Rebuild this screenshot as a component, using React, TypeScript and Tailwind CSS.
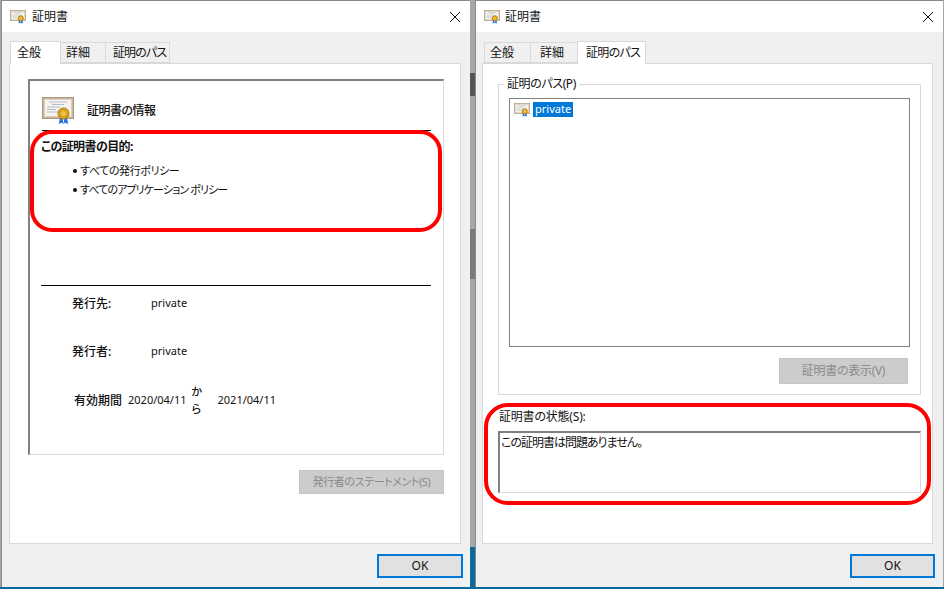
import React from 'react';

const font = "font-['Noto_Sans','Noto_Sans_CJK_JP',sans-serif] [font-feature-settings:'palt']";

function CertIcon({ className }: { className: string }) {
  return (
    <svg className={className} viewBox="0 0 32 28">
      <rect x="0.5" y="0.5" width="31" height="21" fill="#c9b9a4" stroke="#a8977f" />
      <rect x="2.5" y="2.5" width="27" height="17" fill="#f7f4ee" stroke="#d8cdbd" />
      <path d="M7 5h18M10 7.5h12M5 10h13M5 12.5h9M5 15h11" stroke="#b3bdca" strokeWidth="1" />
      <path d="M18 20l-1 7 3-1.5 1.5 1.5 1-6zM25 20l1 7-3-1.5-1.500 1.500-1-6z" fill="#1f6fe0" />
      <circle cx="21.500" cy="16.500" r="5.500" fill="#d8a21c" stroke="#a8790f" />
      <circle cx="21.500" cy="16.500" r="2.500" fill="#efc24a" />
    </svg>
  );
}

function Tab({ label, active, className }: { label: string; active?: boolean; className: string }) {
  return (
    <div
      className={`flex items-center whitespace-nowrap border border-[#d9d9d9] text-[12px] text-[#111] ${
        active ? 'z-10 -mb-px h-[23px] border-b-0 bg-white' : 'h-[21px] bg-[#f0f0f0]'
      } ${className}`}
    >
      {label}
    </div>
  );
}

function Titlebar({ titleClass }: { titleClass: string }) {
  return (
    <div className="flex h-[31px] shrink-0 items-center bg-white pl-[8px] pr-[9px]">
      <CertIcon className="h-[14px] w-[16px]" />
      <span className={`text-[12px] text-[#111] ${titleClass}`}>証明書</span>
      <svg className="ml-auto h-[12px] w-[12px]" viewBox="0 0 12 12">
        <path d="M1 1l10 10M11 1L1 11" stroke="#111" strokeWidth="1" />
      </svg>
    </div>
  );
}

function GrayButton({ label, className }: { label: string; className: string }) {
  return (
    <div className={`flex items-center justify-center whitespace-nowrap border border-[#c4c4c4] bg-[#cccccc] text-[#8a8a8a] ${className}`}>
      {label}
    </div>
  );
}

function OkButton({ className }: { className: string }) {
  return (
    <div className={`mt-[10px] ml-auto flex h-[24px] items-center justify-center border-2 border-[#0078d7] bg-[#e1e1e1] text-[12px] text-[#111] ${className}`}>
      OK
    </div>
  );
}

function GeneralWindow() {
  return (
    <div className="relative flex h-[587px] w-[469px] shrink-0 flex-col border-t border-l border-[#8a8a8a] bg-[#f0f0f0]">
      <Titlebar titleClass="ml-[6px]" />
      <div className="flex flex-1 flex-col pl-[7px] pr-[9px]">
        <div className="mt-[8px] flex h-[23px] items-end pl-px">
          <Tab label="全般" active className="w-[51px] pl-[6px]" />
          <Tab label="詳細" className="-ml-px w-[46px] pl-[5px]" />
          <Tab label="証明のパス" className="-ml-px w-[65px] pl-[7px] tracking-[-0.9px]" />
        </div>
        <div className="h-[481px] border border-[#d9d9d9] bg-white pl-[18px] pr-[16px] pt-[15px]">
          <div className="h-[376px] border-t-2 border-l-2 border-r border-b border-t-[#808080] border-l-[#808080] border-r-[#d9d9d9] border-b-[#d9d9d9] px-[11px]">
            <div className="flex h-[50px] items-center pl-px pt-[10px]">
              <CertIcon className="h-[28px] w-[32px]" />
              <span className="ml-[13px] text-[12px] font-medium tracking-[-0.5px] text-[#111]">証明書の情報</span>
            </div>
            <div className="mx-px mt-[-1px] h-px bg-black" />
            <div className="pt-[7px] text-[12px] font-bold tracking-[-0.6px] text-[#111]">この証明書の目的:</div>
            <ul className="mt-[6px] ml-[32px] flex flex-col gap-px text-[11px] leading-[18px] text-[#111]">
              <li className="flex items-center tracking-[-0.4px]">
                <span className="mr-[3px] h-[4px] w-[4px] rounded-full bg-[#111]" />
                すべての発行ポリシー
              </li>
              <li className="flex items-center tracking-[-0.9px]">
                <span className="mr-[3px] h-[4px] w-[4px] rounded-full bg-[#111]" />
                すべてのアプリケーション ポリシー
              </li>
            </ul>
            <div className="mt-[86px] mr-px h-px bg-black" />
            <div className="mt-[9px] flex h-[17px] items-center pl-[31px] text-[12px] text-[#111]">
              <span className="w-[79px] font-medium">発行先:</span>
              <span className="text-[11px]">private</span>
            </div>
            <div className="mt-[31px] flex h-[17px] items-center pl-[31px] text-[12px] text-[#111]">
              <span className="w-[79px] font-medium">発行者:</span>
              <span className="text-[11px]">private</span>
            </div>
            <div className="mt-[32px] flex h-[17px] items-center pl-[33px] text-[11px] text-[#111]">
              <span className="w-[54px] text-[12px] font-medium">有効期間</span>
              <span>2020/04/11</span>
              <span className="ml-[5px] w-[20px] font-medium">から</span>
              <span className="ml-[6px]">2021/04/11</span>
            </div>
          </div>
          <GrayButton label="発行者のステートメント(S)" className="mt-[15px] ml-auto h-[24px] w-[145px] text-[11px] tracking-[-0.4px]" />
        </div>
        <OkButton className="-mr-[2px] w-[86px]" />
      </div>
      {/* 赤枠 */}
      <div className="absolute top-[129px] left-[28px] h-[102px] w-[412px] rounded-[22px] border-[4px] border-[#ff0000]" />
    </div>
  );
}

function PathWindow() {
  return (
    <div className="relative flex h-[587px] w-[468px] shrink-0 flex-col border-t border-l border-[#8a8a8a] bg-[#f0f0f0]">
      <Titlebar titleClass="ml-[5px]" />
      <div className="flex flex-1 flex-col pl-[6px] pr-[10px]">
        <div className="mt-[8px] flex h-[23px] items-end pl-[2px]">
          <Tab label="全般" className="w-[47px] pl-[5px]" />
          <Tab label="詳細" className="-ml-px w-[48px] pl-[9px]" />
          <Tab label="証明のパス" active className="-ml-px w-[69px] pl-[8px] tracking-[-0.7px]" />
        </div>
        <div className="h-[481px] border border-[#d9d9d9] bg-white pl-[15px] pr-[11px] pt-[20px]">
          <div className="relative h-[311px] border border-[#d9d9d9] px-[10px] pt-[13px]">
            <span className="absolute -top-[10px] left-[5px] bg-white px-[3px] text-[12px] tracking-[-0.4px] text-[#111]">証明のパス(P)</span>
            <div className="h-[249px] border border-[#808080] pl-[4px] pt-[3px]">
              <div className="flex items-center">
                <CertIcon className="h-[14px] w-[16px]" />
                <span className="ml-[3px] flex h-[15px] items-center bg-[#0078d7] px-[2px] text-[11px] text-white">private</span>
              </div>
            </div>
            <GrayButton label="証明書の表示(V)" className="mt-[11px] mr-[2px] ml-auto h-[26px] w-[129px] text-[12px] tracking-[-0.3px]" />
          </div>
          <div className="mt-[13px] pl-px text-[12px] leading-[18px] tracking-[-0.2px] text-[#111]">証明書の状態(S):</div>
          <div className="mt-[5px] h-[62px] border-t-2 border-l-2 border-r border-b border-t-[#808080] border-l-[#808080] border-r-[#d9d9d9] border-b-[#d9d9d9] pt-[1px] pl-[1px] text-[12px] leading-[18px] tracking-[-1px] text-[#111]">
            この証明書は問題ありません。
          </div>
        </div>
        <OkButton className="-mr-[2px] w-[85px]" />
      </div>
      {/* 赤枠 */}
      <div className="absolute top-[402px] left-[8px] h-[102px] w-[447px] rounded-[24px] border-[4px] border-[#ff0000]" />
    </div>
  );
}

export default function App() {
  return (
    <div className={`relative flex h-[589px] w-[944px] items-start gap-[5px] overflow-hidden bg-[#a6a6a6] pl-px ${font}`}>
      <GeneralWindow />
      <PathWindow />
      <div className="absolute top-[73px] left-[470px] h-[23px] w-[5px] bg-[#555555]" />
      <div className="absolute top-[229px] left-[470px] h-[50px] w-[5px] bg-[#7a7a7a]" />
      <div className="absolute bottom-0 left-0 h-[2px] w-[944px] bg-[#0a6c9e]" />
      <div className="absolute top-[547px] left-[470px] h-[42px] w-[5px] bg-[#0a6c9e]" />
    </div>
  );
}
